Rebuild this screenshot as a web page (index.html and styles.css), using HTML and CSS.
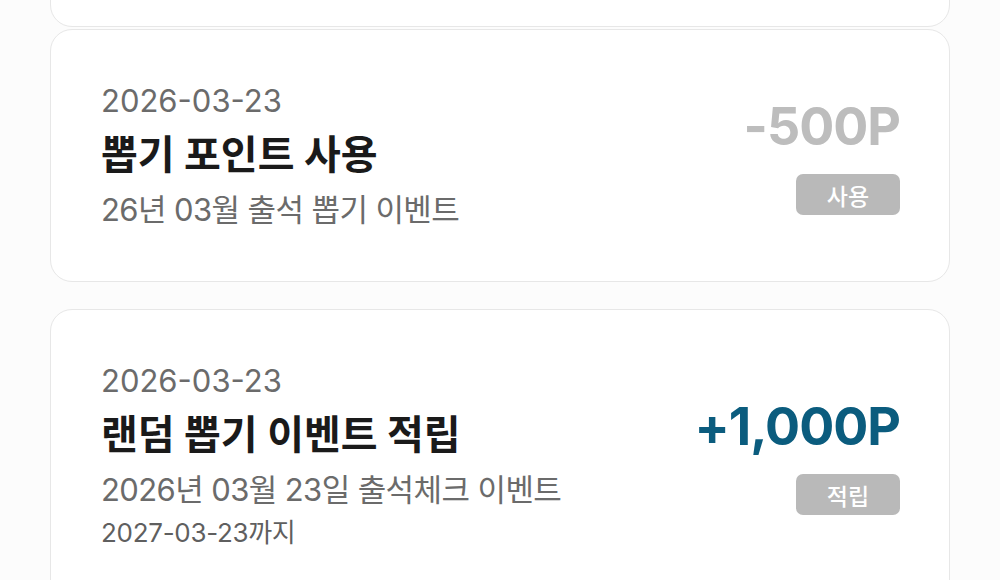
FILE: index.html
```html
<!DOCTYPE html>
<html lang="ko">
<head>
<meta charset="utf-8">
<title>포인트 내역</title>
<link rel="stylesheet" href="styles.css">
</head>
<body>
<main class="history">
  <div class="card card--peek" aria-hidden="true"></div>

  <article class="card">
    <div class="info">
      <p class="date">2026-03-23</p>
      <h2 class="title">뽑기 포인트 사용</h2>
      <p class="desc">26년 03월 출석 뽑기 이벤트</p>
    </div>
    <div class="side">
      <p class="amount amount--used">-500P</p>
      <span class="badge">사용</span>
    </div>
  </article>

  <article class="card">
    <div class="info">
      <p class="date">2026-03-23</p>
      <h2 class="title">랜덤 뽑기 이벤트 적립</h2>
      <p class="desc">2026년 03월 23일 출석체크 이벤트</p>
      <p class="expiry">2027-03-23까지</p>
    </div>
    <div class="side">
      <p class="amount amount--earned">+1,000P</p>
      <span class="badge">적립</span>
    </div>
  </article>
</main>
</body>
</html>
```

FILE: styles.css
```css
* { box-sizing: border-box; }

html, body {
  margin: 0;
  padding: 0;
  background: #fcfcfc;
}

body {
  font-family: Inter, "Noto Sans CJK KR", sans-serif;
  color: #1c1c1c;
  overflow: hidden;
}

p, h2 { margin: 0; }

.history {
  display: flex;
  flex-direction: column;
  gap: 27px;
  padding: 0 50px;
  margin-top: -226px;
}

.card {
  display: flex;
  justify-content: space-between;
  align-items: center;
  padding: 53px 49px 51px 50px;
  background: #ffffff;
  border: 1px solid #e7e7e7;
  border-radius: 22px;
}

.card--peek {
  height: 253px;
  margin-bottom: -25px;
}

.info {
  display: flex;
  flex-direction: column;
}

.date {
  font-size: 31px;
  line-height: 36px;
  color: #6b6b6b;
}

.title {
  font-size: 40px;
  line-height: 52px;
  font-weight: 700;
  color: #1a1a1a;
  margin-top: 10px;
}

.desc {
  font-size: 31px;
  line-height: 40px;
  letter-spacing: -0.6px;
  color: #6b6b6b;
  margin-top: 9px;
}

.expiry {
  font-size: 26px;
  line-height: 34px;
  letter-spacing: -0.3px;
  color: #5f5f5f;
  margin-top: 6px;
}

.side {
  display: flex;
  flex-direction: column;
  align-items: flex-end;
  gap: 19px;
  margin-top: 1px;
}

.amount {
  font-size: 52px;
  line-height: 56px;
  font-weight: 700;
  letter-spacing: -1px;
}

.amount--used { color: #bdbdbd; }
.amount--earned { color: #0b5c7e; }

.badge {
  display: flex;
  align-items: center;
  justify-content: center;
  width: 104px;
  height: 41px;
  border-radius: 7px;
  background: #b9b9b9;
  color: #ffffff;
  font-size: 23px;
  font-weight: 500;
}
```
